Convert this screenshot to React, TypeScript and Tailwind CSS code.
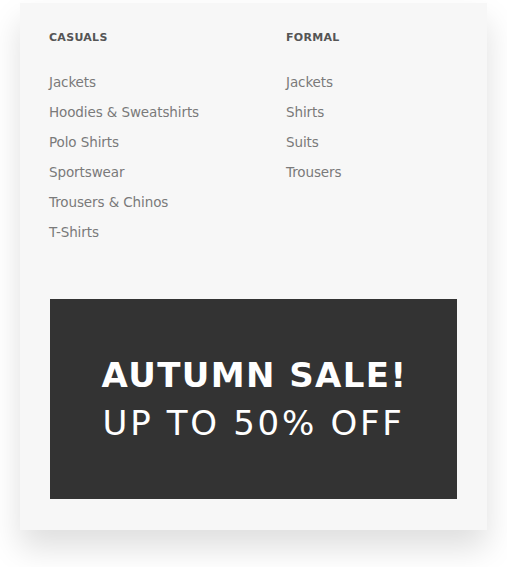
const casuals = ['Jackets', 'Hoodies & Sweatshirts', 'Polo Shirts', 'Sportswear', 'Trousers & Chinos', 'T-Shirts']
const formal = ['Jackets', 'Shirts', 'Suits', 'Trousers']

function Column({ title, items }: { title: string; items: string[] }) {
  return (
    <div className="flex flex-col">
      <h3 className="text-[11px] leading-4 font-bold text-[#555] tracking-[0.3px]">{title}</h3>
      <ul className="mt-[21px]">
        {items.map(item => (
          <li key={item} className="text-[13.5px] leading-[30px] text-[#7a7a7a] tracking-[-0.1px]">{item}</li>
        ))}
      </ul>
    </div>
  )
}

export default function App() {
  return (
    <div className="min-h-screen bg-white pt-[3px] pl-5 w-[507px]" style={{ fontFamily: '"DejaVu Sans", sans-serif' }}>
      <div className="w-[467px] bg-[#f7f7f7] shadow-[0_18px_30px_rgba(0,0,0,0.13)] pt-[27px] pb-[31px] px-[30px]">
        <div className="grid grid-cols-[237px_1fr] -ml-px">
          <Column title="CASUALS" items={casuals} />
          <Column title="FORMAL" items={formal} />
        </div>
        <div className="mt-[52px] h-[200px] bg-[#333] flex flex-col items-center justify-center text-white text-[34px] leading-[48px]">
          <p className="font-bold tracking-[1.4px] pl-[2px]">AUTUMN SALE!</p>
          <p className="tracking-[2.7px]">UP TO 50% OFF</p>
        </div>
      </div>
    </div>
  )
}
